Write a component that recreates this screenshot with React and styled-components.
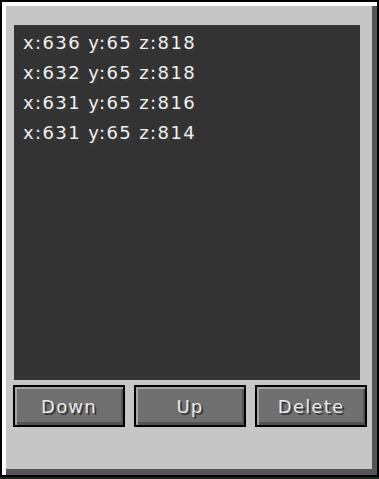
import React from 'react';
import styled, { createGlobalStyle } from 'styled-components';

const Global = createGlobalStyle`
  html, body { margin: 0; padding: 0; background: #1d2a17; }
  body { width: 379px; height: 479px; overflow: hidden; }
  #root { width: 379px; height: 479px; }
`;

const Panel = styled.div`
  box-sizing: border-box;
  width: 379px;
  height: 477px;
  background: #c6c6c6;
  border: 2px solid #000;
  box-shadow: inset 4px 4px 0 #ffffff, inset -5px -6px 0 #555555;
  padding: 23px 11px 0 11px;
  display: flex;
  flex-direction: column;
  font-family: "DejaVu Sans", "Liberation Sans", sans-serif;
`;

const List = styled.div`
  box-sizing: border-box;
  height: 355px;
  margin: 0 6px 0 1px;
  background: #333333;
  padding: 3px 0 0 9px;
  display: flex;
  flex-direction: column;
`;

const Entry = styled.div`
  height: 30px;
  line-height: 30px;
  font-size: 18px;
  letter-spacing: 1.4px;
  color: #f0f0f0;
  text-shadow: 2px 2px 0 #3a3a3a;
  white-space: pre;
`;

const ButtonRow = styled.div`
  margin-top: 5px;
  display: grid;
  grid-template-columns: repeat(3, 112px);
  column-gap: 9px;
`;

const Button = styled.button`
  box-sizing: border-box;
  height: 42px;
  margin: 0;
  padding: 0;
  border: 2px solid #000;
  background: #707070;
  box-shadow: inset 2px 2px 0 #a5a5a5, inset -2px -3px 0 #545454;
  color: #e8e8e8;
  font-family: "DejaVu Sans", "Liberation Sans", sans-serif;
  font-size: 18px;
  letter-spacing: 1.2px;
  text-shadow: 2px 2px 0 #383838;
  cursor: pointer;
`;

const entries = [
  'x:636 y:65 z:818',
  'x:632 y:65 z:818',
  'x:631 y:65 z:816',
  'x:631 y:65 z:814',
];

export default function App() {
  return (
    <>
      <Global />
      <Panel>
        <List>
          {entries.map((e) => (
            <Entry key={e}>{e}</Entry>
          ))}
        </List>
        <ButtonRow>
          <Button>Down</Button>
          <Button>Up</Button>
          <Button>Delete</Button>
        </ButtonRow>
      </Panel>
    </>
  );
}
